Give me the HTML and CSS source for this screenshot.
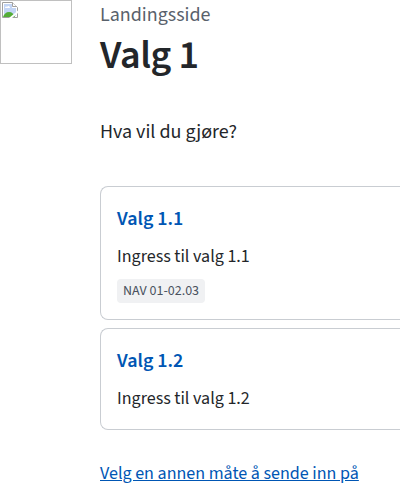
FILE: index.html
```html
<!DOCTYPE html>
<html lang="nb">
<head>
<meta charset="utf-8">
<title>Valg 1</title>
<link rel="stylesheet" href="styles.css">
</head>
<body>
<div class="page">
  <div class="logo">
    <svg width="16" height="16" viewBox="0 0 16 16"><path d="M.5 .5h10l5 5v10h-15z" fill="#fff" stroke="#a0a0a0"/><path d="M2 2h8v4h4v8H2z" fill="#c3d5f5"/><path d="M3 6c0-1 1-2 2-1 1-2 3-1 3 1z" fill="#fff"/><path d="M1 15c1-3 3-5 6-5s5 2 6 5z" fill="#54ad37"/><path d="M10.500 .5v4h4" fill="#fff" stroke="#a0a0a0"/><path d="M16 8.500L7 16h3l6-5z" fill="#fff"/></svg>
  </div>
  <main class="content">
    <p class="eyebrow">Landingsside</p>
    <h1>Valg 1</h1>
    <p class="question">Hva vil du gjøre?</p>
    <div class="cards">
      <a class="card">
        <h2>Valg 1.1</h2>
        <p class="ingress">Ingress til valg 1.1</p>
        <span class="tag">NAV 01-02.03</span>
      </a>
      <a class="card">
        <h2>Valg 1.2</h2>
        <p class="ingress">Ingress til valg 1.2</p>
      </a>
    </div>
    <a class="link">Velg en annen måte å sende inn på</a>
  </main>
</div>
</body>
</html>
```
FILE: styles.css
```css
* { box-sizing: border-box; }
body { margin: 0; background: #fff; color: #23262a; font-family: "Source Sans 3", "Source Sans Pro", "Noto Sans", sans-serif; }
h1, h2, p { margin: 0; white-space: nowrap; }
.page { display: flex; height: 502px; }
.logo { width: 72px; height: 64px; flex: none; border: 1px solid #c0c0c0; padding: 1px; }
.logo svg { display: block; }
.content { flex: 1; min-width: 0; margin-left: 28px; padding-top: 1px; }
.eyebrow { color: #59616b; font-size: 20px; line-height: 28px; }
h1 { margin-top: 1px; font-size: 40px; line-height: 52px; font-weight: 600; letter-spacing: -0.4px; }
.question { margin-top: 36px; font-size: 20px; line-height: 28px; }
.cards { display: flex; flex-direction: column; gap: 8px; margin-top: 40px; }
.card { display: block; border: 1px solid #c9cdd2; border-right: 0; border-radius: 8px 0 0 8px; padding: 17px 16px 15px; height: 134px; }
.card + .card { height: 102px; }
h2 { color: #0056b4; font-size: 20px; line-height: 30px; font-weight: 600; }
.ingress { margin-top: 9px; font-size: 18px; line-height: 28px; }
.tag { display: block; width: 88px; height: 24px; margin-top: 8px; padding: 0 6px; border-radius: 4px; background: #f0f1f3; color: #49515e; font-size: 14px; line-height: 24px; white-space: nowrap; }
.link { display: inline-block; margin-top: 30px; color: #0056b4; font-size: 18px; line-height: 28px; text-decoration: underline; white-space: nowrap; }
```
